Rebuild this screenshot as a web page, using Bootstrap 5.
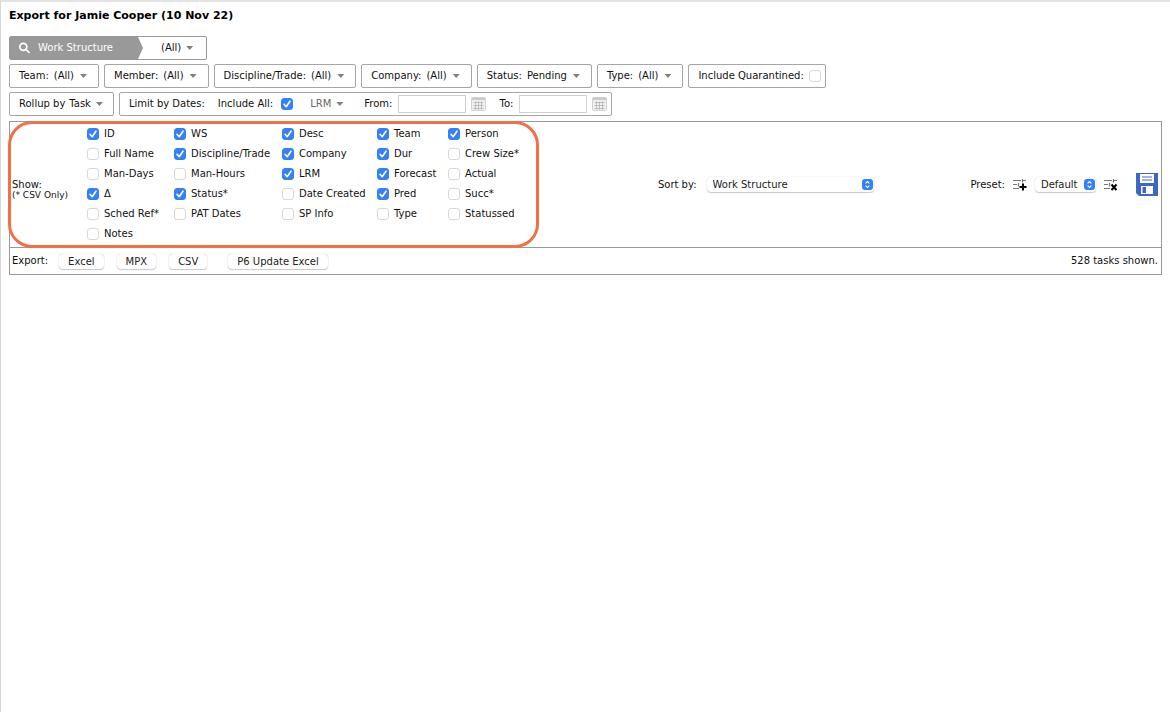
<!DOCTYPE html>
<html lang="en">
<head>
<meta charset="utf-8">
<meta name="viewport" content="width=device-width, initial-scale=1">
<title>Export for Jamie Cooper</title>
<link href="https://cdn.jsdelivr.net/npm/bootstrap@5.3.0/dist/css/bootstrap.min.css" rel="stylesheet">
<style>
  body { font-family: "DejaVu Sans", sans-serif; font-size: 10px; line-height: 14px; color: #111; border-top: 2px solid #e4e4e4; border-left: 1px solid #d6d6d6; min-height: 100vh; }
  .page { padding: 7px 8px 8px; }
  h1 { font-size: 11px; line-height: 14px; margin-bottom: 13px; color: #000; }
  .filters { gap: 4px 5px; }
  .filter { height: 24px; padding: 0 11px 0 9px; border: 1px solid #a6a6a6; border-radius: 2px; background: #fff; color: #111; display: inline-flex; align-items: center; white-space: nowrap; gap: 5px; }
  .caret { width: 7px; height: 4px; margin-left: 1px; background: #808080; clip-path: polygon(0 0, 100% 0, 50% 100%); }
  .rollup { gap: 4px; padding-right: 10px; }
  .structure { padding: 0 13px 0 0; gap: 0; border-color: #999; }
  .structure-name { height: 22px; width: 133px; padding-left: 8px; margin-right: 18px; gap: 8px; background: #999; color: #fff; clip-path: polygon(0 0, 128px 0, 100% 50%, 128px 100%, 0 100%); }
  .structure .caret { margin-left: 5px; }
  .bare { border: 0; padding: 0; background: none; }
  .muted { color: #666; }
  .tick { appearance: none; flex: none; width: 12px; height: 12px; margin: 0; border: 1px solid #d8d8d8; border-radius: 3px; background: #fff; }
  .tick:checked { border-color: #3380f8; background: #3380f8 url("data:image/svg+xml,%3Csvg xmlns='http://www.w3.org/2000/svg' viewBox='0 0 10 10'%3E%3Cpath d='M2 5.3 4.2 7.7 8 2.2' fill='none' stroke='white' stroke-width='1.6' stroke-linecap='round' stroke-linejoin='round'/%3E%3C/svg%3E") center/10px no-repeat; }
  .limits { gap: 5px; padding-right: 4px; }
  .limits > label { margin-right: 1px; }
  .date-box { width: 68px; height: 18px; border: 1px solid #d2d2d2; padding: 0 3px; }
  .panel { border: 1px solid #999; margin-top: 5px; }
  .show-row { border-bottom: 1px solid #999; }
  .show-cell { width: 529px; padding: 2px 0 3px 2px; }
  .show-cell::after { content: ""; position: absolute; inset: -1px 0 -1px -2px; border: 3px solid #f07048; border-radius: 24px; pointer-events: none; }
  .show-title { width: 75px; padding-top: 10px; line-height: 11px; }
  .note { font-size: 9px; line-height: 10px; white-space: nowrap; }
  .fields { display: grid; grid-template-columns: 87px 108px 95px 71px 80px; grid-auto-rows: 20px; align-items: center; }
  .fields label { display: flex; align-items: center; gap: 5px; white-space: nowrap; }
  .picker { appearance: none; height: 15px; border: 0; border-radius: 4px; padding: 0 18px 0 6px; color: #222; box-shadow: 0 0 1px #bbb, 0 1px 1px #ccc; background: #fff url("data:image/svg+xml,%3Csvg xmlns='http://www.w3.org/2000/svg' viewBox='0 0 11 11'%3E%3Crect width='11' height='11' rx='3' fill='%233380f8'/%3E%3Cpath d='M3.6 4.4 5.5 2.5 7.4 4.4M3.6 6.6 5.5 8.5 7.4 6.6' fill='none' stroke='white' stroke-width='1.1'/%3E%3C/svg%3E") right 1px center/11px no-repeat; }
  .sort-group { gap: 10px; padding-left: 22px; }
  .sort-picker { width: 167px; }
  .preset-picker { width: 61px; }
  .preset-group { gap: 8px; padding-right: 3px; }
  .save { margin-left: 10px; }
  .export-row { height: 26px; padding: 0 3px 0 2px; gap: 11px; }
  .push { height: 15px; padding: 0 9px; border: 0; border-radius: 4px; background: #fff; color: #222; box-shadow: 0 0 1px #aaa, 0 1px 1px #ccc; line-height: 15px; }
  .exports { gap: 13px; }
  svg { flex: none; display: block; }
</style>
</head>
<body>
<svg width="0" height="0" class="d-none" aria-hidden="true">
  <symbol id="calendar" viewBox="0 0 15 14">
    <rect x=".5" y=".5" width="14" height="13" rx="1" fill="#f0f0f0" stroke="#d2d2d2"/>
    <path d="M1 2H14" stroke="#cacaca" stroke-width="2"/>
    <path d="M2.500 5.500H12.500M2.500 8.500H12.500M2.500 11.500H12.500M4.500 4.500V12.500M7.500 4.500V12.500M10.500 4.500V12.500" stroke="#b4b4b4" stroke-width=".8"/>
  </symbol>
  <symbol id="sliders" viewBox="0 0 14 12">
    <path d="M0 1.5H8M10 1.5H13M9.5 0V3.500M0 5.500H4M0 9.500H6M5.500 4V7.500" stroke="#777" stroke-width="1.200" fill="none"/>
  </symbol>
</svg>
<main class="page">
  <h1 class="fw-bold">Export for Jamie Cooper (10 Nov 22)</h1>
  <div class="filters d-flex flex-column align-items-start">
    <button class="filter structure" type="button">
      <span class="structure-name d-flex align-items-center">
        <svg width="12" height="12" viewBox="0 0 12 12" fill="none" stroke="#fff" stroke-width="1.7"><circle cx="5.300" cy="4.800" r="3.500"/><path d="M8 7.500 11 10.500" stroke-linecap="round"/></svg>
        Work Structure
      </span>
      (All) <span class="caret"></span>
    </button>
    <div class="filters d-flex flex-wrap">
      <button class="filter" type="button"><span>Team:</span><span>(All)</span><span class="caret"></span></button>
      <button class="filter" type="button"><span>Member:</span><span>(All)</span><span class="caret"></span></button>
      <button class="filter" type="button"><span>Discipline/Trade:</span><span>(All)</span><span class="caret"></span></button>
      <button class="filter" type="button"><span>Company:</span><span>(All)</span><span class="caret"></span></button>
      <button class="filter" type="button"><span>Status:</span><span>Pending</span><span class="caret"></span></button>
      <button class="filter" type="button"><span>Type:</span><span>(All)</span><span class="caret"></span></button>
      <label class="filter pe-1">Include Quarantined: <input class="tick" type="checkbox"></label>
    </div>
    <div class="filters d-flex flex-wrap">
      <button class="filter rollup" type="button"><span>Rollup by</span><span>Task</span><span class="caret"></span></button>
      <div class="filter limits">
        <span class="me-2">Limit by Dates:</span>
        <label class="d-flex align-items-center gap-2 me-2">Include All: <input class="tick" type="checkbox" checked></label>
        <button class="bare muted d-flex align-items-center gap-1 ms-1 me-3" type="button">LRM <span class="caret"></span></button>
        <label for="from">From:</label>
        <input class="date-box" id="from" type="text">
        <button class="bare" type="button" aria-label="Choose start date"><svg width="15" height="14"><use href="#calendar"/></svg></button>
        <label class="ms-2" for="to">To:</label>
        <input class="date-box" id="to" type="text">
        <button class="bare" type="button" aria-label="Choose end date"><svg width="15" height="14"><use href="#calendar"/></svg></button>
      </div>
    </div>
  </div>

  <section class="panel">
    <div class="show-row d-flex align-items-center">
      <div class="show-cell position-relative d-flex align-items-center">
        <div class="show-title">Show:<div class="note">(* CSV Only)</div></div>
        <div class="fields">
          <label><input class="tick" type="checkbox" checked>ID</label>
          <label><input class="tick" type="checkbox" checked>WS</label>
          <label><input class="tick" type="checkbox" checked>Desc</label>
          <label><input class="tick" type="checkbox" checked>Team</label>
          <label><input class="tick" type="checkbox" checked>Person</label>
          <label><input class="tick" type="checkbox">Full Name</label>
          <label><input class="tick" type="checkbox" checked>Discipline/Trade</label>
          <label><input class="tick" type="checkbox" checked>Company</label>
          <label><input class="tick" type="checkbox" checked>Dur</label>
          <label><input class="tick" type="checkbox">Crew Size*</label>
          <label><input class="tick" type="checkbox">Man-Days</label>
          <label><input class="tick" type="checkbox">Man-Hours</label>
          <label><input class="tick" type="checkbox" checked>LRM</label>
          <label><input class="tick" type="checkbox" checked>Forecast</label>
          <label><input class="tick" type="checkbox">Actual</label>
          <label><input class="tick" type="checkbox" checked>Δ</label>
          <label><input class="tick" type="checkbox" checked>Status*</label>
          <label><input class="tick" type="checkbox">Date Created</label>
          <label><input class="tick" type="checkbox" checked>Pred</label>
          <label><input class="tick" type="checkbox">Succ*</label>
          <label><input class="tick" type="checkbox">Sched Ref*</label>
          <label><input class="tick" type="checkbox">PAT Dates</label>
          <label><input class="tick" type="checkbox">SP Info</label>
          <label><input class="tick" type="checkbox">Type</label>
          <label><input class="tick" type="checkbox">Statussed</label>
          <label><input class="tick" type="checkbox">Notes</label>
        </div>
      </div>
      <div class="sort-group flex-grow-1 d-flex justify-content-center align-items-center">
        <label for="sort">Sort by:</label>
        <select class="sort-picker picker" id="sort"><option>Work Structure</option></select>
      </div>
      <div class="preset-group d-flex align-items-center">
        <label for="preset">Preset:</label>
        <button class="bare" type="button" aria-label="Add preset"><svg width="14" height="12"><use href="#sliders"/><path d="M10 4.500V11.500M6.500 8H13.500" stroke="#000" stroke-width="2"/></svg></button>
        <select class="preset-picker picker" id="preset"><option>Default</option></select>
        <button class="bare" type="button" aria-label="Delete preset"><svg width="14" height="12"><use href="#sliders"/><path d="M7.500 5.500 12.500 11M12.500 5.500 7.500 11" stroke="#000" stroke-width="2"/></svg></button>
        <button class="bare save" type="button" aria-label="Save"><svg width="22" height="23" viewBox="0 0 22 23"><path d="M0 0H22V23H3L0 20Z" fill="#3c66c8"/><path d="M4 1H18V10H4Z" fill="#fff"/><path d="M6 4H16M6 7H16" stroke="#7f9bdc" stroke-width="1.500"/><path d="M5 13H17V21H5Z" fill="#fff"/><path d="M6.500 14H10V20H6.500Z" fill="#3c66c8"/></svg></button>
      </div>
    </div>
    <div class="export-row d-flex align-items-center">
      <span>Export:</span>
      <div class="exports d-flex flex-grow-1">
        <button class="push" type="button">Excel</button>
        <button class="push" type="button">MPX</button>
        <button class="push" type="button">CSV</button>
        <button class="push ms-2" type="button">P6 Update Excel</button>
      </div>
      <span>528 tasks shown.</span>
    </div>
  </section>
</main>
<script src="https://cdn.jsdelivr.net/npm/bootstrap@5.3.0/dist/js/bootstrap.bundle.min.js"></script>
</body>
</html>
